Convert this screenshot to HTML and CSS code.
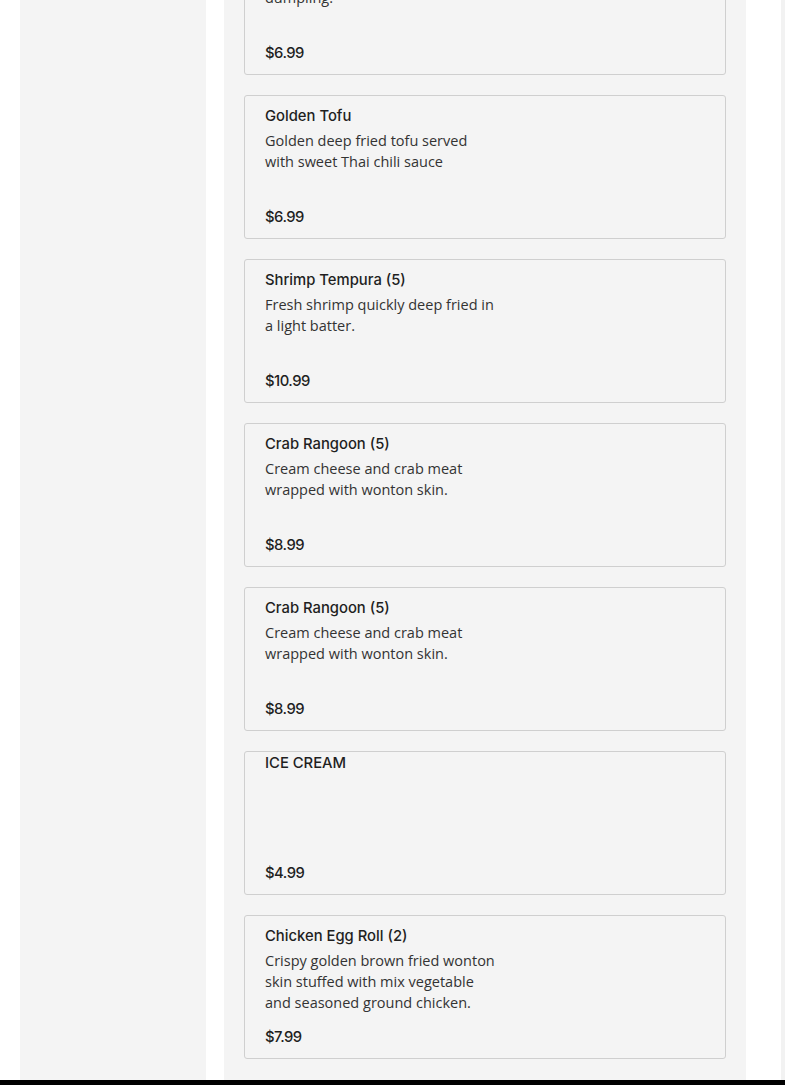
FILE: index.html
```html
<!DOCTYPE html>
<html>
<head>
<meta charset="utf-8">
<link rel="stylesheet" href="styles.css">
</head>
<body>
<div class="page">
  <aside class="sidebar"></aside>
  <main class="menu">
    <div class="list">
      <div class="card">
        <div class="name">Pot Stickers (6)</div>
        <div class="desc">Pan fried pork and vegetable dumpling.</div>
        <div class="price">$6.99</div>
      </div>
      <div class="card">
        <div class="name">Golden Tofu</div>
        <div class="desc">Golden deep fried tofu served with sweet Thai chili sauce</div>
        <div class="price">$6.99</div>
      </div>
      <div class="card">
        <div class="name">Shrimp Tempura (5)</div>
        <div class="desc">Fresh shrimp quickly deep fried in a light batter.</div>
        <div class="price">$10.99</div>
      </div>
      <div class="card">
        <div class="name">Crab Rangoon (5)</div>
        <div class="desc">Cream cheese and crab meat wrapped with wonton skin.</div>
        <div class="price">$8.99</div>
      </div>
      <div class="card">
        <div class="name">Crab Rangoon (5)</div>
        <div class="desc">Cream cheese and crab meat wrapped with wonton skin.</div>
        <div class="price">$8.99</div>
      </div>
      <div class="card card-nodesc">
        <div class="name">ICE CREAM</div>
        <div class="price">$4.99</div>
      </div>
      <div class="card">
        <div class="name">Chicken Egg Roll (2)</div>
        <div class="desc">Crispy golden brown fried wonton skin stuffed with mix vegetable and seasoned ground chicken.</div>
        <div class="price">$7.99</div>
      </div>
    </div>
  </main>
  <div class="edge"></div>
</div>
<div class="footer-bar"></div>
</body>
</html>
```
FILE: styles.css
```css
html, body {
  margin: 0;
  padding: 0;
  background: #ffffff;
  overflow: hidden;
}
body {
  height: 1085px;
  display: flex;
  flex-direction: column;
}
.page {
  display: flex;
  height: 1080px;
  padding-left: 20px;
  gap: 18px;
  overflow: hidden;
}
.sidebar {
  width: 186px;
  flex: none;
  background: #f4f4f4;
}
.menu {
  width: 522px;
  flex: none;
  background: #f4f4f4;
  padding: 0 20px;
  box-sizing: border-box;
  overflow: hidden;
}
.list {
  display: flex;
  flex-direction: column;
  gap: 20px;
  margin-top: -69px;
}
.card {
  height: 144px;
  box-sizing: border-box;
  border: 1px solid #cfcfcf;
  border-radius: 3px;
  background: #f4f4f4;
  padding: 10px 20px 11px;
  display: flex;
  flex-direction: column;
}
.card-nodesc {
  padding-top: 1px;
}
.name {
  font-family: Inter, "Noto Sans", sans-serif;
  font-weight: 450;
  font-size: 14.8px;
  line-height: 20px;
  color: #1f1f1f;
}
.desc {
  margin-top: 4px;
  width: 232px;
  font-family: "Open Sans", sans-serif;
  font-size: 14.5px;
  line-height: 21px;
  color: #333333;
}
.price {
  margin-top: auto;
  font-family: Inter, "Noto Sans", sans-serif;
  font-weight: 450;
  font-size: 14.8px;
  line-height: 20px;
  color: #1f1f1f;
  letter-spacing: -0.5px;
}
.edge {
  margin-left: auto;
  width: 4px;
  flex: none;
  background: #f2f2f2;
}
.footer-bar {
  height: 5px;
  background: #000000;
}
```
